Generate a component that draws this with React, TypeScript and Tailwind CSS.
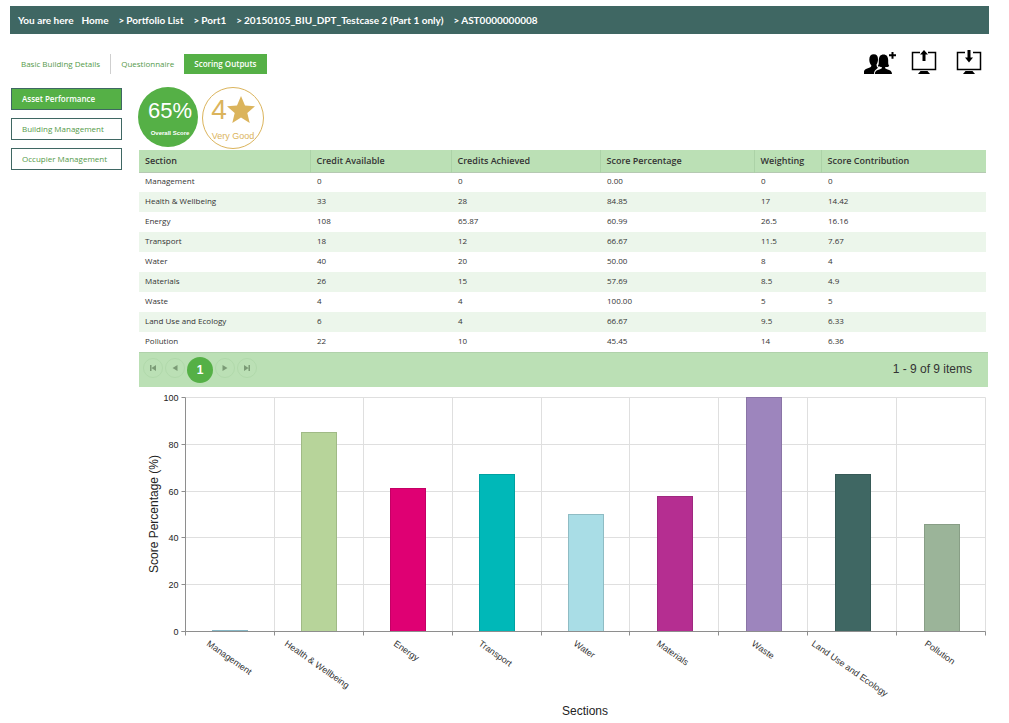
import React from 'react';

const breadcrumbs = ['Portfolio List', 'Port1', '20150105_BIU_DPT_Testcase 2 (Part 1 only)', 'AST0000000008'];

const columns = ['Section', 'Credit Available', 'Credits Achieved', 'Score Percentage', 'Weighting', 'Score Contribution'];

const rows = [
  ['Management', '0', '0', '0.00', '0', '0'],
  ['Health & Wellbeing', '33', '28', '84.85', '17', '14.42'],
  ['Energy', '108', '65.87', '60.99', '26.5', '16.16'],
  ['Transport', '18', '12', '66.67', '11.5', '7.67'],
  ['Water', '40', '20', '50.00', '8', '4'],
  ['Materials', '26', '15', '57.69', '8.5', '4.9'],
  ['Waste', '4', '4', '100.00', '5', '5'],
  ['Land Use and Ecology', '6', '4', '66.67', '9.5', '6.33'],
  ['Pollution', '22', '10', '45.45', '14', '6.36'],
];

// labelX is where the slanted axis label starts
const bars = [
  { name: 'Management', value: 0, color: '#a9dde6', border: '#86b6c4', labelX: 67 },
  { name: 'Health & Wellbeing', value: 84.85, color: '#b7d49a', border: '#a0ba86', labelX: 145 },
  { name: 'Energy', value: 60.99, color: '#df0073', border: '#c40065', labelX: 254 },
  { name: 'Transport', value: 66.67, color: '#00b8b8', border: '#00a1a1', labelX: 339 },
  { name: 'Water', value: 50, color: '#a9dde6', border: '#8fbcc4', labelX: 434 },
  { name: 'Materials', value: 57.69, color: '#b52e91', border: '#9f287f', labelX: 517 },
  { name: 'Waste', value: 100, color: '#9d85bd', border: '#8a75a6', labelX: 612 },
  { name: 'Land Use and Ecology', value: 66.67, color: '#3f6763', border: '#375a57', labelX: 672 },
  { name: 'Pollution', value: 45.45, color: '#9bb499', border: '#889e86', labelX: 785 },
];

const UsersIcon = () => (
  <svg width="34" height="26" viewBox="0 0 34 26" aria-hidden="true">
    <path d="M1 25v-2.500c0-1.500 1.500-2.500 4.500-3.500 2-.700 3-1.200 2.800-2.800C7 15 6.300 13 6.300 10.500 6.300 7 8 5.300 10.800 5.300s4.200 1.700 4.200 5c0 1.700-.300 3.500-1.500 5.200.200 2 .500 2.700 1.500 3.200l-2.500 2.300c-1 1-1.500 2-1.500 4z" />
    <path d="M11.800 25c0-3 2-4 5.200-4.800 1.500-.500 2-1 2-2-2 0-3.500-.400-4.200-1.200 1.200-1.800 1-3.300 1-5.500 0-4 1.700-6 4.700-6s4.700 2 4.700 6c0 2.200-.200 3.700 1 5.500-.700.800-2.200 1.200-4.200 1.200 0 1 .500 1.500 2 2C27 21 29 22 29 25z" />
    <path d="M28.500 3h2v2.300H33v2h-2.500v2.400h-2V7.300H26v-2h2.500z" />
  </svg>
);

const ScreenIcon = ({ direction }: { direction: 'up' | 'down' }) => (
  <svg width="26" height="26" viewBox="0 0 26 26" aria-hidden="true">
    <path d="M9 3.500H1.500v17h23v-17H17" fill="none" stroke="#000" strokeWidth="1.500" />
    <path d="M9.500 22h7l2.500 3H7z" />
    {direction === 'up' ? (
      <path d="M13 1l4 4.500h-2.500V12h-3V5.500H9z" />
    ) : (
      <path d="M13 13.500L9 8.500h2.500V1h3v7.500H17z" />
    )}
  </svg>
);

const SideButton = ({ label, active }: { label: string; active?: boolean }) => (
  <button
    type="button"
    className={`h-[22px] w-full border border-[#3f6763] px-2.5 text-left text-[8px] leading-4 whitespace-nowrap ${
      active ? 'bg-[#55b046] font-semibold text-white' : 'bg-white text-[#559a49]'
    }`}
  >
    {label}
  </button>
);

const PagerButton = ({ label, d }: { label: string; d: string }) => (
  <button type="button" aria-label={label} className="mt-[5px] flex size-5 items-center justify-center rounded-full border border-[#b1d9ab]">
    <svg width="8" height="8" viewBox="0 0 8 8" fill="#7b9b76" aria-hidden="true">
      <path d={d} />
    </svg>
  </button>
);

const ScoreChart = () => {
  const left = 46.5;
  const top = 10.5;
  const width = 800;
  const height = 234;
  const bottom = top + height;
  const step = width / bars.length;

  return (
    <svg viewBox="0 0 850 334" className="block h-auto w-full" role="img" aria-label="Score percentage by section">
      {[0, 20, 40, 60, 80, 100].map((tick) => {
        const y = Math.floor(bottom - (tick * height) / 100) + 0.5;
        return (
          <g key={tick}>
            <path d={`M${left} ${y}H${left + width}`} stroke="#dfdfdf" />
            <path d={`M${left - 4} ${y}H${left}`} stroke="#8e8e8e" />
            <text x={left - 7} y={y + 3} textAnchor="end" fontSize="9" fill="#232323">{tick}</text>
          </g>
        );
      })}
      {bars.map((bar, i) => {
        const x = Math.floor(left + step * (i + 1)) + 0.5;
        return (
          <g key={bar.name}>
            <path d={`M${x} ${top}V${bottom}`} stroke="#dfdfdf" />
            <path d={`M${x} ${bottom}v4`} stroke="#8e8e8e" />
          </g>
        );
      })}
      {bars.map((bar, i) => {
        const x = Math.floor(left + step * (i + 0.5) - 17) + 0.5;
        // an empty bar still shows as a thin line on the axis
        const y = Math.min(Math.round(bottom - (bar.value * height) / 100) + 0.5, bottom) - 1;
        return (
          <g key={bar.name}>
            <rect x={x} y={y} width="35" height={bottom - y} fill={bar.color} stroke={bar.border} />
            <text transform={`translate(${bar.labelX} 258) rotate(35)`} fontSize="9" fill="#333">{bar.name}</text>
          </g>
        );
      })}
      <path d={`M${left} ${top}V${bottom + 4}M${left - 4} ${bottom}H${left + width}`} stroke="#8e8e8e" fill="none" />
      <text transform="translate(19 127) rotate(-90)" textAnchor="middle" fontSize="12" fill="#232323">Score Percentage (%)</text>
      <text x="446" y="328" textAnchor="middle" fontSize="12" fill="#232323">Sections</text>
    </svg>
  );
};

const App = () => {
  return (
    <div className="bg-white pt-1.5 pr-5 pl-2.5 font-['Open_Sans','Noto_Sans',sans-serif] text-[#333]">
      <nav aria-label="Breadcrumb" className="flex h-7 items-center bg-[#3f6763] px-2 font-['Lato','Open_Sans',sans-serif] text-[10px] font-bold text-white">
        <span className="mr-2">You are here</span>
        <a href="#">Home</a>
        {breadcrumbs.map((crumb) => (
          <React.Fragment key={crumb}>
            <span className="mr-0.5 ml-2.5">&gt;</span>
            <a href="#">{crumb}</a>
          </React.Fragment>
        ))}
      </nav>

      <div className="flex items-start justify-between pt-[15px]">
        <nav aria-label="Asset" className="mt-[5px] flex h-5 items-stretch text-[8px] leading-5 text-[#559a49]">
          <a href="#" className="border-r border-[#cfcfcf] pr-2.5 pl-[11px]">Basic Building Details</a>
          <a href="#" className="px-2.5">Questionnaire</a>
          <a href="#" className="bg-[#55b046] px-2.5 font-semibold text-white">Scoring Outputs</a>
        </nav>
        <div className="mr-[7px] flex">
          <button type="button" aria-label="Add users" className="mr-3.5"><UsersIcon /></button>
          <button type="button" aria-label="Upload" className="mr-[19px]"><ScreenIcon direction="up" /></button>
          <button type="button" aria-label="Download"><ScreenIcon direction="down" /></button>
        </div>
      </div>

      <div className="mt-3 flex">
        <aside className="mt-px mr-4 ml-px flex w-[111px] shrink-0 flex-col gap-2">
          <SideButton label="Asset Performance" active />
          <SideButton label="Building Management" />
          <SideButton label="Occupier Management" />
        </aside>

        <main className="min-w-0 flex-1">
          <div className="flex h-[63px] gap-1 font-['Liberation_Sans',Arial,sans-serif]">
            <div className="flex size-[60px] flex-col items-center rounded-full bg-[#55b046] pt-2.5 pl-1 text-white">
              <span className="text-[22px] leading-7">65%</span>
              <span className="text-[6px] leading-4 font-bold whitespace-nowrap">Overall Score</span>
            </div>
            <div className="flex size-[62px] flex-col items-center rounded-full border border-[#dbb45c] pt-1.5 text-[#dbb45c]">
              <span className="flex items-center text-[28px] leading-8">
                4
                <svg width="28" height="28" viewBox="0 0 28 28" fill="#dbb45c" aria-hidden="true">
                  <path d="M14 0l4 9.500 10 .800-7.700 6.700L22.700 27 14 21.500 5.300 27l2.400-10L0 10.300l10-.800z" />
                </svg>
              </span>
              <span className="text-[9px] leading-5 whitespace-nowrap">Very Good</span>
            </div>
          </div>

          <div className="pr-[3px] pl-px">
            <table className="w-full table-fixed border-collapse text-left text-[8px]">
              <colgroup>
                <col className="w-[171px]" />
                <col className="w-[141px]" />
                <col className="w-[149px]" />
                <col className="w-[154px]" />
                <col className="w-[67px]" />
                <col />
              </colgroup>
              <thead>
                <tr className="h-[22px] border-b border-[#b5c9b2] bg-[#bbe0b5] text-[9px]">
                  {columns.map((column) => (
                    <th key={column} scope="col" className="border-l border-[#acd2a7] py-0 pl-1.5 font-semibold first:border-l-0">{column}</th>
                  ))}
                </tr>
              </thead>
              <tbody>
                {rows.map((row) => (
                  <tr key={row[0]} className="h-5 even:bg-[#ecf6eb]">
                    {row.map((cell, i) => (
                      <td key={i} className="pt-0 pb-0.5 pl-[7px] first:pl-1.5">{cell}</td>
                    ))}
                  </tr>
                ))}
              </tbody>
            </table>
          </div>

          <div className="ml-px font-['Liberation_Sans',Arial,sans-serif]">
            <div className="mr-px flex h-[35px] justify-between border-t border-[#b0d2ab] bg-[#bbe0b5] pr-4 pl-1">
              <div className="flex items-start gap-0.5">
                <PagerButton label="First page" d="M1 1h1.500v6H1zM7 1v6L2.500 4z" />
                <PagerButton label="Previous page" d="M6.500 1v6L1.500 4z" />
                <button type="button" aria-current="page" className="mt-1 size-[26px] rounded-full bg-[#55b046] text-xs font-bold text-white">1</button>
                <PagerButton label="Next page" d="M1.500 1v6l5-3z" />
                <PagerButton label="Last page" d="M1 1v6l4.500-3zM5.500 1H7v6H5.500z" />
              </div>
              <span className="text-xs leading-8">1 - 9 of 9 items</span>
            </div>
            <ScoreChart />
          </div>
        </main>
      </div>
    </div>
  );
};

export default App;
